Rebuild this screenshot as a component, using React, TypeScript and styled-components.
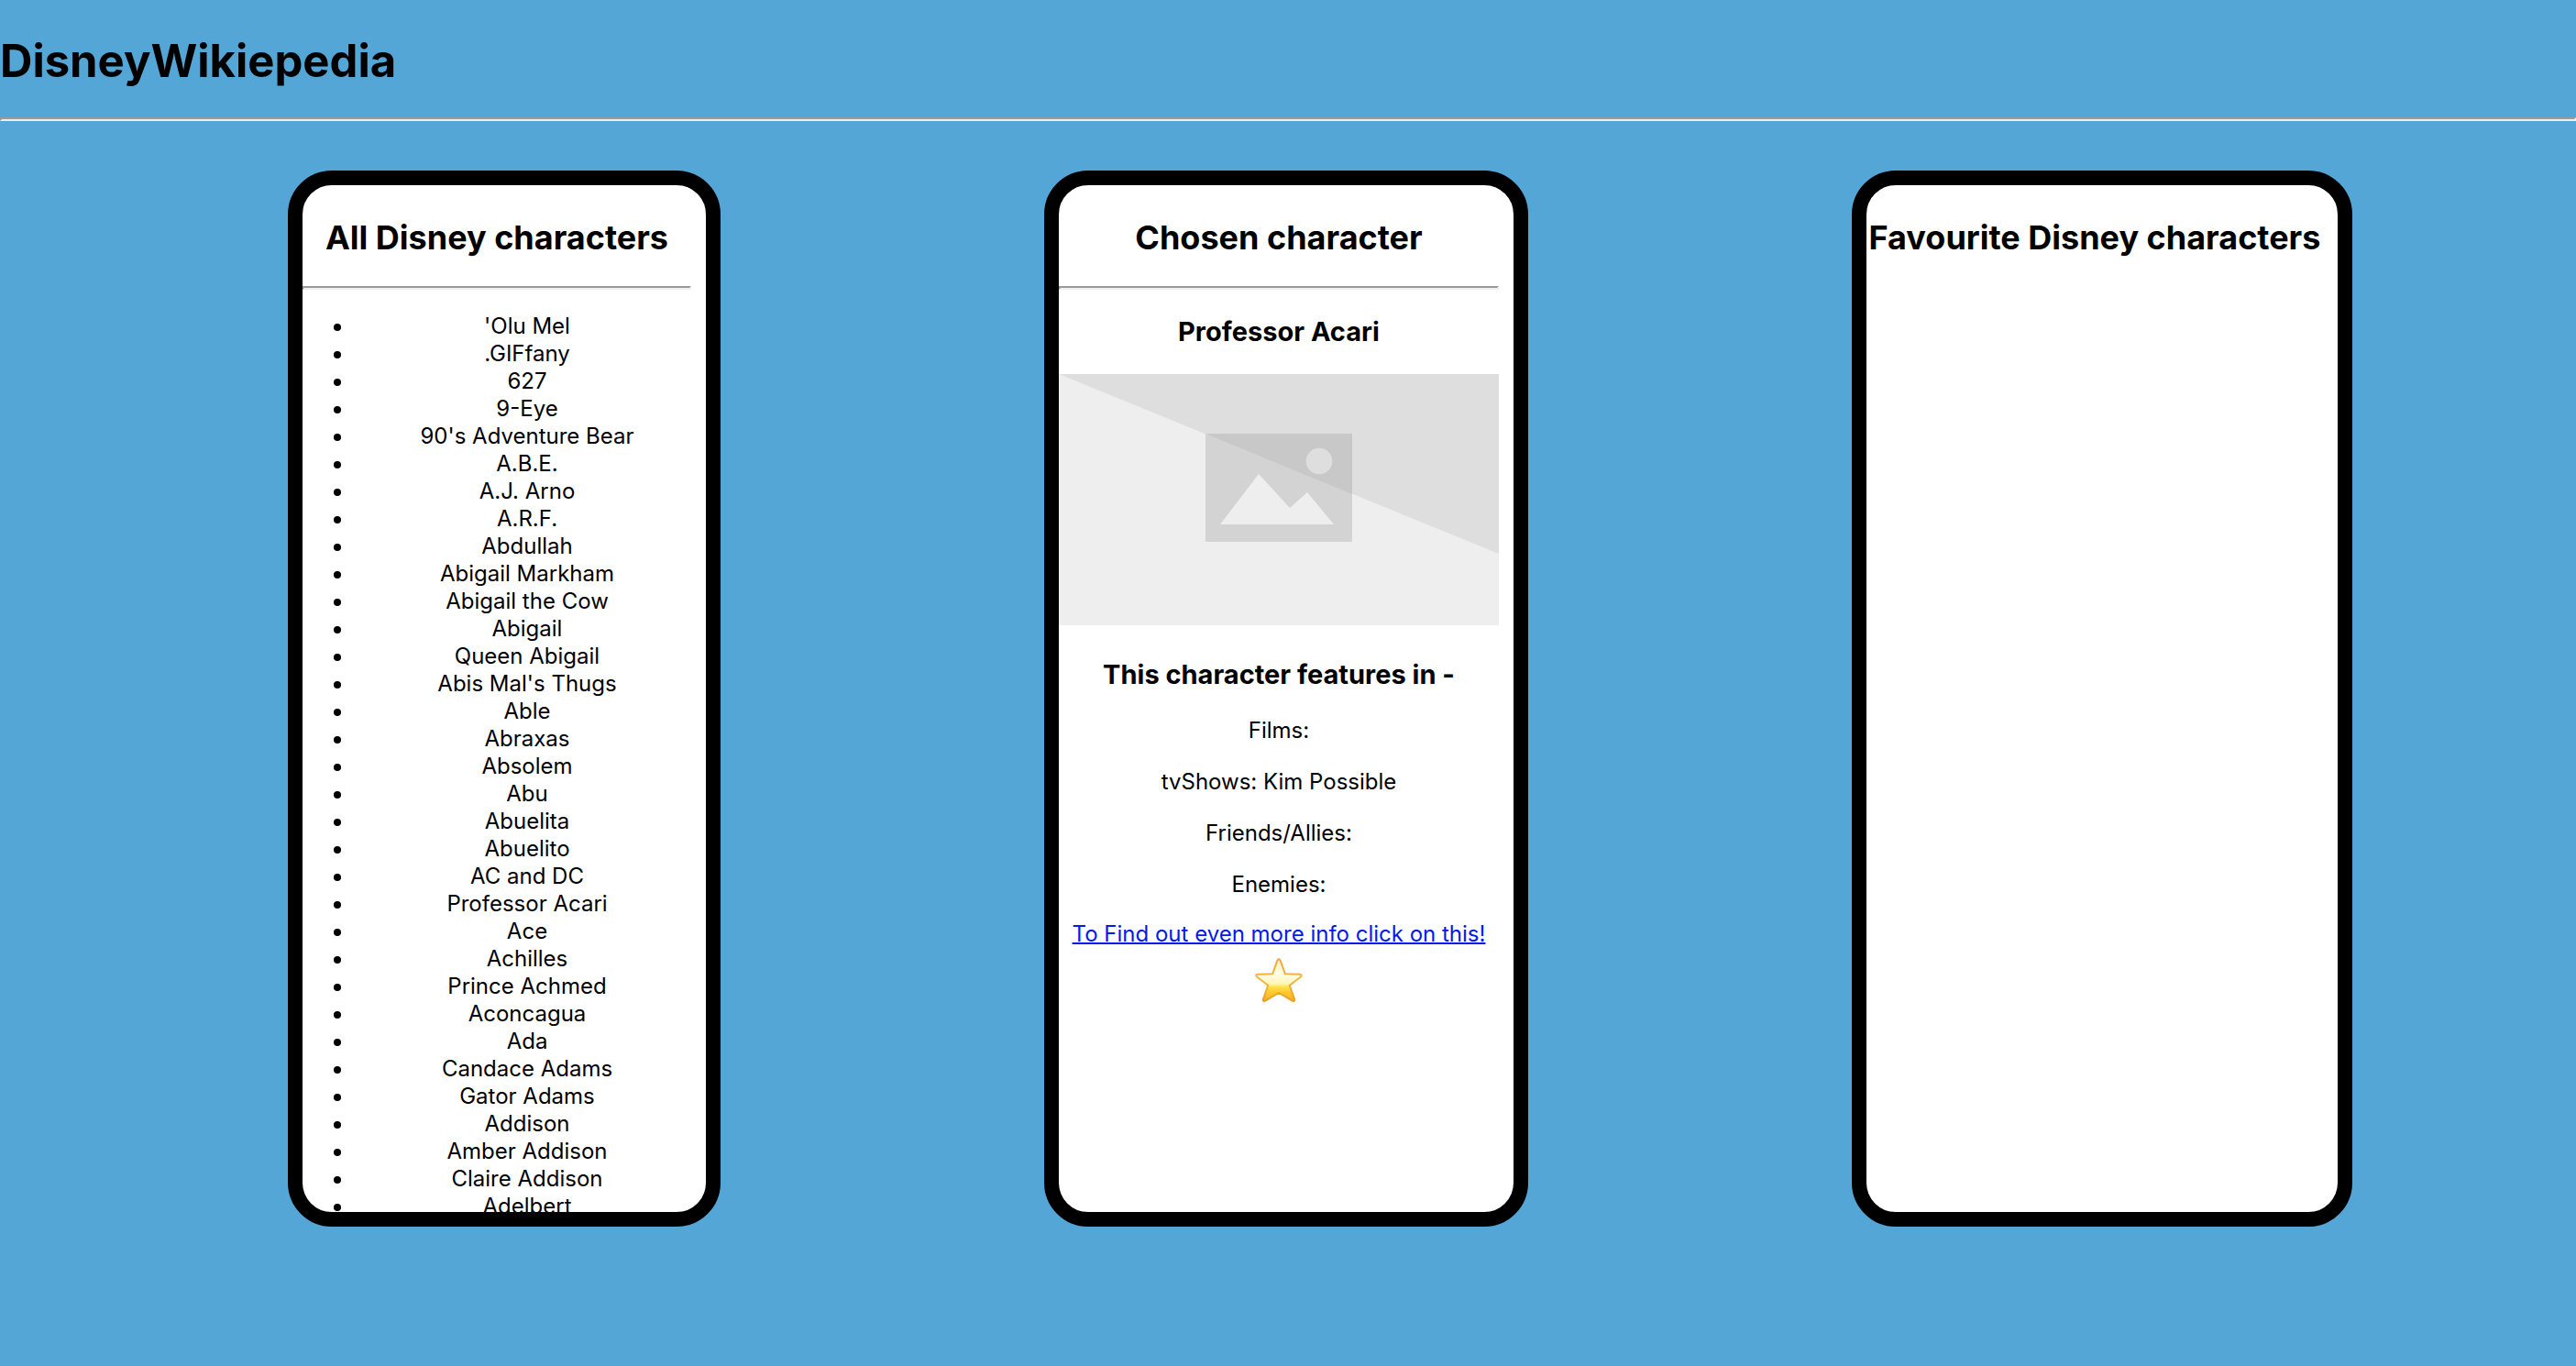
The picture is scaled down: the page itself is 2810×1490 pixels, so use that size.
import React from 'react';
import styled, { createGlobalStyle } from 'styled-components';

const GlobalStyle = createGlobalStyle`
  *, *::before, *::after { box-sizing: border-box; }
  body {
    margin: 0;
    min-height: 100vh;
    background: #53a6d6;
    color: #000;
    font-family: Inter, "Liberation Sans", sans-serif;
    font-size: 24px;
    line-height: 30px;
  }
`;

const Header = styled.header`
  padding: 37px 0 31px;
`;

const SiteTitle = styled.h1`
  margin: 0;
  font-size: 49px;
  line-height: 60px;
  font-weight: 700;
`;

const Rule = styled.hr`
  margin: 0;
  border: 2px solid;
  border-color: #9a9a9a #eee #eee #9a9a9a;
`;

const Board = styled.main`
  display: grid;
  grid-template-columns: 472fr 528fr 546fr;
  gap: 353px;
  padding: 54px 244px 0 314px;
`;

const Card = styled.section`
  height: calc(100vh - 338px);
  min-width: 0;
  padding-right: 16px;
  border: 16px solid #000;
  border-radius: 48px;
  background: #fff;
  text-align: center;
  overflow: hidden;
`;

const CardTitle = styled.h2`
  margin: 34px 0 30px;
  font-size: 36px;
  line-height: 46px;
  font-weight: 700;
  white-space: nowrap;
`;

const CharacterList = styled.ul`
  margin: 25px 0 0;
  padding: 0 0 0 56px;
`;

const Character = styled.li`
  padding-left: 10px;
`;

const Subtitle = styled.h3`
  margin: 28px 0;
  font-size: 29px;
  line-height: 36px;
  font-weight: 700;
`;

const FeatureTitle = styled(Subtitle)`
  margin-top: 36px;
`;

const Placeholder = styled.svg`
  display: block;
  width: 100%;
  height: auto;
`;

const Detail = styled.p`
  margin: 0 0 26px;
`;

const InfoLink = styled.a`
  display: block;
  margin-top: -2px;
  color: #001aee;
  white-space: nowrap;
  text-decoration-thickness: 2px;
`;

const FavouriteButton = styled.button`
  margin: 7px 0 0;
  padding: 0;
  border: 0;
  background: none;
  cursor: pointer;
`;

const StarIcon = styled.svg`
  display: block;
  width: 56px;
  height: 56px;
`;

const characters = [
  "'Olu Mel", '.GIFfany', '627', '9-Eye', "90's Adventure Bear", 'A.B.E.', 'A.J. Arno',
  'A.R.F.', 'Abdullah', 'Abigail Markham', 'Abigail the Cow', 'Abigail', 'Queen Abigail',
  "Abis Mal's Thugs", 'Able', 'Abraxas', 'Absolem', 'Abu', 'Abuelita', 'Abuelito',
  'AC and DC', 'Professor Acari', 'Ace', 'Achilles', 'Prince Achmed', 'Aconcagua', 'Ada',
  'Candace Adams', 'Gator Adams', 'Addison', 'Amber Addison', 'Claire Addison', 'Adelbert',
];

const details = ['Films:', 'tvShows: Kim Possible', 'Friends/Allies:', 'Enemies:'];

function CharacterImage() {
  return (
    <Placeholder viewBox="0 0 480 274" role="img" aria-label="Professor Acari">
      <path d="M0 0H480V274H0Z" fill="#eee" />
      <path d="M0 0H480V196Z" fill="#dedede" />
      <path d="M160 65H320V183H160Z" fill="#d3d3d3" />
      <path d="M160 65H320V131Z" fill="#c8c8c8" />
      <circle cx="284" cy="95" r="14.3" fill="#dedede" />
      <path d="M176 164 218 109 252 146 271 129 300 164Z" fill="#eee" />
    </Placeholder>
  );
}

function Star() {
  return (
    <StarIcon viewBox="0 0 56 56" aria-hidden="true">
      <defs>
        <linearGradient id="starFill" x1="0" y1="0" x2="0" y2="1">
          <stop offset="0" stopColor="#fff0b8" />
          <stop offset="0.35" stopColor="#fffde6" />
          <stop offset="0.58" stopColor="#fff7b8" />
          <stop offset="0.68" stopColor="#ffdc40" />
          <stop offset="1" stopColor="#fba91c" />
        </linearGradient>
        <linearGradient id="starEdge" x1="0" y1="0" x2="0" y2="1">
          <stop offset="0" stopColor="#f3a542" />
          <stop offset="0.5" stopColor="#f2b548" />
          <stop offset="1" stopColor="#e9a01f" />
        </linearGradient>
      </defs>
      <path
        d="M28 5.2C28.9 5.2 29.4 6 29.8 7L34.8 21.2 50.6 21.7C53.2 21.9 53.4 23.4 51.6 24.8L39.8 33.8 45 48.8C45.5 51 44.2 51.6 42.4 50.5L28 42 13.6 50.5C11.8 51.6 10.5 51 11 48.8L16.2 33.8 4.4 24.8C2.6 23.4 2.8 21.9 5.4 21.7L21.2 21.2 26.2 7C26.6 6 27.1 5.2 28 5.2Z"
        fill="url(#starFill)"
        stroke="url(#starEdge)"
        strokeWidth="2"
        strokeLinejoin="round"
      />
    </StarIcon>
  );
}

export default function App() {
  return (
    <>
      <GlobalStyle />
      <Header>
        <SiteTitle>DisneyWikiepedia</SiteTitle>
      </Header>
      <Rule />
      <Board>
        <Card>
          <CardTitle>All Disney characters</CardTitle>
          <Rule />
          <CharacterList>
            {characters.map((name) => (
              <Character key={name}>{name}</Character>
            ))}
          </CharacterList>
        </Card>
        <Card>
          <CardTitle>Chosen character</CardTitle>
          <Rule />
          <Subtitle>Professor Acari</Subtitle>
          <CharacterImage />
          <FeatureTitle>This character features in -</FeatureTitle>
          {details.map((text) => (
            <Detail key={text}>{text}</Detail>
          ))}
          <InfoLink href="#more">To Find out even more info click on this!</InfoLink>
          <FavouriteButton type="button" aria-label="Add to favourites">
            <Star />
          </FavouriteButton>
        </Card>
        <Card>
          <CardTitle>Favourite Disney characters</CardTitle>
        </Card>
      </Board>
    </>
  );
}
